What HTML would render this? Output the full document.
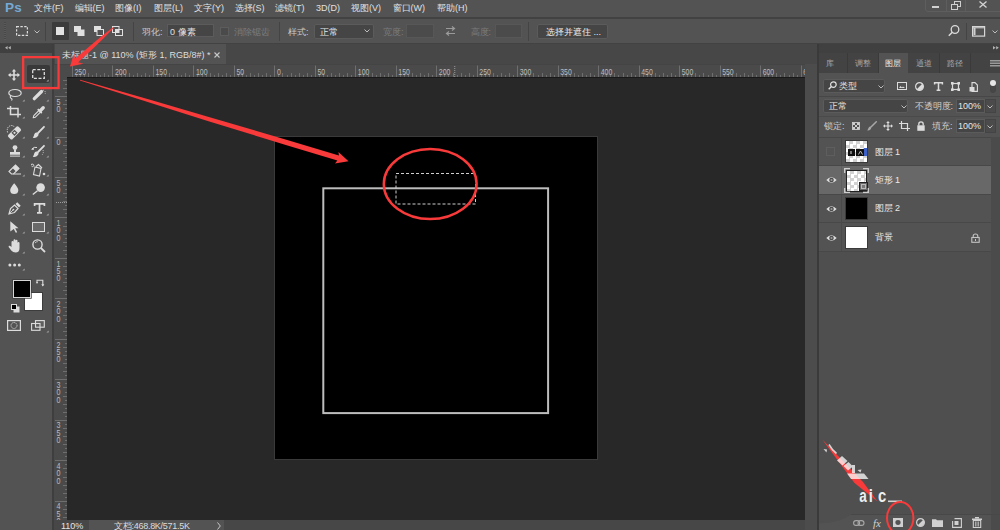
<!DOCTYPE html>
<html><head><meta charset="utf-8">
<style>
*{margin:0;padding:0;box-sizing:border-box}
html,body{width:1000px;height:530px;overflow:hidden;background:#535353;font-family:"Liberation Sans",sans-serif;color:#d6d6d6;font-size:10px}
.a{position:absolute}
.t{position:absolute;white-space:nowrap;line-height:1}
svg{position:absolute;overflow:visible}
</style></head><body>
<!-- menu bar -->
<div class="a" style="left:0;top:0;width:1000px;height:17px;background:#535353"></div>
<div class="a" style="left:0;top:17px;width:1000px;height:2px;background:#424242"></div>
<!-- options bar -->
<div class="a" style="left:0;top:19px;width:1000px;height:24px;background:#535353"></div>
<div class="a" style="left:0;top:43px;width:1000px;height:1px;background:#424242"></div>
<!-- tool panel -->
<div class="a" style="left:0;top:44px;width:52px;height:9px;background:#404040"></div>
<div class="a" style="left:0;top:53px;width:52px;height:477px;background:#535353"></div>
<div class="a" style="left:52px;top:44px;width:2px;height:486px;background:#3e3e3e"></div>
<!-- doc tab bar -->
<div class="a" style="left:54px;top:44px;width:763px;height:20px;background:#474747"></div>
<div class="a" style="left:55px;top:44px;width:171px;height:20px;background:#535353"></div>
<!-- rulers -->
<div class="a" style="left:54px;top:64px;width:751px;height:13px;background:#4a4a4a"></div>
<div class="a" style="left:54px;top:77px;width:13px;height:443px;background:#4a4a4a"></div>
<!-- pasteboard -->
<div class="a" style="left:67px;top:77px;width:738px;height:443px;background:#282828"></div>
<div class="a" style="left:67px;top:77px;width:738px;height:1px;background:#1a1a1a"></div>
<!-- right strip -->
<div class="a" style="left:805px;top:64px;width:12px;height:466px;background:#4c4c4c"></div>
<!-- status bar -->
<div class="a" style="left:54px;top:520px;width:751px;height:10px;background:#474747"></div>
<div class="a" style="left:89px;top:520px;width:135px;height:10px;background:#535353"></div>
<!-- document -->
<div class="a" style="left:274px;top:136px;width:324px;height:324px;background:#000;border:1px solid #3a3a3a"></div>
<svg style="left:0;top:0" width="1000" height="530"><rect x="323.3" y="188.3" width="224.8" height="224.8" fill="none" stroke="#bdbdbd" stroke-width="2"/></svg>

<!-- right panel -->
<div class="a" style="left:817px;top:44px;width:2px;height:486px;background:#3a3a3a"></div>
<div class="a" style="left:819px;top:44px;width:181px;height:9px;background:#404040"></div>
<div class="a" style="left:819px;top:53px;width:181px;height:20px;background:#434343"></div>
<div class="a" style="left:878px;top:53px;width:30px;height:20px;background:#535353"></div>
<div class="a" style="left:819px;top:73px;width:181px;height:457px;background:#535353"></div>

<svg style="left:54px;top:64px;overflow:hidden" width="751" height="13"><rect x="0" y="0" width="751" height="1" fill="#444"/><path d="M18.5 1.5V13 M22.5 11V13 M26.5 9V13 M30.5 11V13 M34.5 9V13 M38.5 11V13 M42.5 9V13 M46.5 11V13 M50.5 9V13 M54.5 11V13 M58.5 1.5V13 M63.5 11V13 M67.5 9V13 M71.5 11V13 M75.5 9V13 M79.5 11V13 M83.5 9V13 M87.5 11V13 M91.5 9V13 M95.5 11V13 M99.5 1.5V13 M103.5 11V13 M107.5 9V13 M111.5 11V13 M115.5 9V13 M119.5 11V13 M123.5 9V13 M127.5 11V13 M131.5 9V13 M135.5 11V13 M139.5 1.5V13 M143.5 11V13 M148.5 9V13 M152.5 11V13 M156.5 9V13 M160.5 11V13 M164.5 9V13 M168.5 11V13 M172.5 9V13 M176.5 11V13 M180.5 1.5V13 M184.5 11V13 M188.5 9V13 M192.5 11V13 M196.5 9V13 M200.5 11V13 M204.5 9V13 M208.5 11V13 M212.5 9V13 M216.5 11V13 M220.5 1.5V13 M224.5 11V13 M228.5 9V13 M233.5 11V13 M237.5 9V13 M241.5 11V13 M245.5 9V13 M249.5 11V13 M253.5 9V13 M257.5 11V13 M261.5 1.5V13 M265.5 11V13 M269.5 9V13 M273.5 11V13 M277.5 9V13 M281.5 11V13 M285.5 9V13 M289.5 11V13 M293.5 9V13 M297.5 11V13 M301.5 1.5V13 M305.5 11V13 M309.5 9V13 M314.5 11V13 M318.5 9V13 M322.5 11V13 M326.5 9V13 M330.5 11V13 M334.5 9V13 M338.5 11V13 M342.5 1.5V13 M346.5 11V13 M350.5 9V13 M354.5 11V13 M358.5 9V13 M362.5 11V13 M366.5 9V13 M370.5 11V13 M374.5 9V13 M378.5 11V13 M382.5 1.5V13 M386.5 11V13 M390.5 9V13 M394.5 11V13 M399.5 9V13 M403.5 11V13 M407.5 9V13 M411.5 11V13 M415.5 9V13 M419.5 11V13 M423.5 1.5V13 M427.5 11V13 M431.5 9V13 M435.5 11V13 M439.5 9V13 M443.5 11V13 M447.5 9V13 M451.5 11V13 M455.5 9V13 M459.5 11V13 M463.5 1.5V13 M467.5 11V13 M471.5 9V13 M475.5 11V13 M479.5 9V13 M484.5 11V13 M488.5 9V13 M492.5 11V13 M496.5 9V13 M500.5 11V13 M504.5 1.5V13 M508.5 11V13 M512.5 9V13 M516.5 11V13 M520.5 9V13 M524.5 11V13 M528.5 9V13 M532.5 11V13 M536.5 9V13 M540.5 11V13 M544.5 1.5V13 M548.5 11V13 M552.5 9V13 M556.5 11V13 M560.5 9V13 M564.5 11V13 M569.5 9V13 M573.5 11V13 M577.5 9V13 M581.5 11V13 M585.5 1.5V13 M589.5 11V13 M593.5 9V13 M597.5 11V13 M601.5 9V13 M605.5 11V13 M609.5 9V13 M613.5 11V13 M617.5 9V13 M621.5 11V13 M625.5 1.5V13 M629.5 11V13 M633.5 9V13 M637.5 11V13 M641.5 9V13 M645.5 11V13 M649.5 9V13 M654.5 11V13 M658.5 9V13 M662.5 11V13 M666.5 1.5V13 M670.5 11V13 M674.5 9V13 M678.5 11V13 M682.5 9V13 M686.5 11V13 M690.5 9V13 M694.5 11V13 M698.5 9V13 M702.5 11V13 M706.5 1.5V13 M710.5 11V13 M714.5 9V13 M718.5 11V13 M722.5 9V13 M726.5 11V13 M730.5 9V13 M735.5 11V13 M739.5 9V13 M743.5 11V13 M747.5 1.5V13" stroke="#6e6e6e" stroke-width="1"/><text x="20.50" y="11.3" font-size="8.4" textLength="11.55" lengthAdjust="spacingAndGlyphs" fill="#bcbcbc" font-family="Liberation Sans">250</text><text x="60.98" y="11.3" font-size="8.4" textLength="11.55" lengthAdjust="spacingAndGlyphs" fill="#bcbcbc" font-family="Liberation Sans">200</text><text x="101.46" y="11.3" font-size="8.4" textLength="11.55" lengthAdjust="spacingAndGlyphs" fill="#bcbcbc" font-family="Liberation Sans">150</text><text x="141.94" y="11.3" font-size="8.4" textLength="11.55" lengthAdjust="spacingAndGlyphs" fill="#bcbcbc" font-family="Liberation Sans">100</text><text x="182.42" y="11.3" font-size="8.4" textLength="7.70" lengthAdjust="spacingAndGlyphs" fill="#bcbcbc" font-family="Liberation Sans">50</text><text x="222.90" y="11.3" font-size="8.4" textLength="3.85" lengthAdjust="spacingAndGlyphs" fill="#bcbcbc" font-family="Liberation Sans">0</text><text x="263.38" y="11.3" font-size="8.4" textLength="7.70" lengthAdjust="spacingAndGlyphs" fill="#bcbcbc" font-family="Liberation Sans">50</text><text x="303.86" y="11.3" font-size="8.4" textLength="11.55" lengthAdjust="spacingAndGlyphs" fill="#bcbcbc" font-family="Liberation Sans">100</text><text x="344.34" y="11.3" font-size="8.4" textLength="11.55" lengthAdjust="spacingAndGlyphs" fill="#bcbcbc" font-family="Liberation Sans">150</text><text x="384.82" y="11.3" font-size="8.4" textLength="11.55" lengthAdjust="spacingAndGlyphs" fill="#bcbcbc" font-family="Liberation Sans">200</text><text x="425.30" y="11.3" font-size="8.4" textLength="11.55" lengthAdjust="spacingAndGlyphs" fill="#bcbcbc" font-family="Liberation Sans">250</text><text x="465.78" y="11.3" font-size="8.4" textLength="11.55" lengthAdjust="spacingAndGlyphs" fill="#bcbcbc" font-family="Liberation Sans">300</text><text x="506.26" y="11.3" font-size="8.4" textLength="11.55" lengthAdjust="spacingAndGlyphs" fill="#bcbcbc" font-family="Liberation Sans">350</text><text x="546.74" y="11.3" font-size="8.4" textLength="11.55" lengthAdjust="spacingAndGlyphs" fill="#bcbcbc" font-family="Liberation Sans">400</text><text x="587.22" y="11.3" font-size="8.4" textLength="11.55" lengthAdjust="spacingAndGlyphs" fill="#bcbcbc" font-family="Liberation Sans">450</text><text x="627.70" y="11.3" font-size="8.4" textLength="11.55" lengthAdjust="spacingAndGlyphs" fill="#bcbcbc" font-family="Liberation Sans">500</text><text x="668.18" y="11.3" font-size="8.4" textLength="11.55" lengthAdjust="spacingAndGlyphs" fill="#bcbcbc" font-family="Liberation Sans">550</text><text x="708.66" y="11.3" font-size="8.4" textLength="11.55" lengthAdjust="spacingAndGlyphs" fill="#bcbcbc" font-family="Liberation Sans">600</text><text x="749.14" y="11.3" font-size="8.4" textLength="11.55" lengthAdjust="spacingAndGlyphs" fill="#bcbcbc" font-family="Liberation Sans">650</text><path d="M400.75 2V13" stroke="#9c9c9c" stroke-width="1" stroke-dasharray="1 1"/></svg>
<svg style="left:54px;top:77px;overflow:hidden" width="13" height="443"><path d="M9 3.5H13 M11 7.5H13 M9 11.5H13 M11 15.5H13 M1 19.5H13 M11 23.5H13 M9 27.5H13 M11 31.5H13 M9 35.5H13 M11 39.5H13 M9 43.5H13 M11 47.5H13 M9 51.5H13 M11 55.5H13 M1 60.5H13 M11 64.5H13 M9 68.5H13 M11 72.5H13 M9 76.5H13 M11 80.5H13 M9 84.5H13 M11 88.5H13 M9 92.5H13 M11 96.5H13 M1 100.5H13 M11 104.5H13 M9 108.5H13 M11 112.5H13 M9 116.5H13 M11 120.5H13 M9 124.5H13 M11 128.5H13 M9 132.5H13 M11 136.5H13 M1 140.5H13 M11 145.5H13 M9 149.5H13 M11 153.5H13 M9 157.5H13 M11 161.5H13 M9 165.5H13 M11 169.5H13 M9 173.5H13 M11 177.5H13 M1 181.5H13 M11 185.5H13 M9 189.5H13 M11 193.5H13 M9 197.5H13 M11 201.5H13 M9 205.5H13 M11 209.5H13 M9 213.5H13 M11 217.5H13 M1 221.5H13 M11 225.5H13 M9 230.5H13 M11 234.5H13 M9 238.5H13 M11 242.5H13 M9 246.5H13 M11 250.5H13 M9 254.5H13 M11 258.5H13 M1 262.5H13 M11 266.5H13 M9 270.5H13 M11 274.5H13 M9 278.5H13 M11 282.5H13 M9 286.5H13 M11 290.5H13 M9 294.5H13 M11 298.5H13 M1 302.5H13 M11 306.5H13 M9 310.5H13 M11 315.5H13 M9 319.5H13 M11 323.5H13 M9 327.5H13 M11 331.5H13 M9 335.5H13 M11 339.5H13 M1 343.5H13 M11 347.5H13 M9 351.5H13 M11 355.5H13 M9 359.5H13 M11 363.5H13 M9 367.5H13 M11 371.5H13 M9 375.5H13 M11 379.5H13 M1 383.5H13 M11 387.5H13 M9 391.5H13 M11 395.5H13 M9 400.5H13 M11 404.5H13 M9 408.5H13 M11 412.5H13 M9 416.5H13 M11 420.5H13 M1 424.5H13 M11 428.5H13 M9 432.5H13 M11 436.5H13 M9 440.5H13" stroke="#6e6e6e" stroke-width="1"/><text x="2.6" y="27.62" font-size="8.4" textLength="4" lengthAdjust="spacingAndGlyphs" fill="#bcbcbc" font-family="Liberation Sans">5</text><text x="2.6" y="34.97" font-size="8.4" textLength="4" lengthAdjust="spacingAndGlyphs" fill="#bcbcbc" font-family="Liberation Sans">0</text><text x="2.6" y="68.10" font-size="8.4" textLength="4" lengthAdjust="spacingAndGlyphs" fill="#bcbcbc" font-family="Liberation Sans">0</text><text x="2.6" y="108.58" font-size="8.4" textLength="4" lengthAdjust="spacingAndGlyphs" fill="#bcbcbc" font-family="Liberation Sans">5</text><text x="2.6" y="115.93" font-size="8.4" textLength="4" lengthAdjust="spacingAndGlyphs" fill="#bcbcbc" font-family="Liberation Sans">0</text><text x="2.6" y="149.06" font-size="8.4" textLength="4" lengthAdjust="spacingAndGlyphs" fill="#bcbcbc" font-family="Liberation Sans">1</text><text x="2.6" y="156.41" font-size="8.4" textLength="4" lengthAdjust="spacingAndGlyphs" fill="#bcbcbc" font-family="Liberation Sans">0</text><text x="2.6" y="163.76" font-size="8.4" textLength="4" lengthAdjust="spacingAndGlyphs" fill="#bcbcbc" font-family="Liberation Sans">0</text><text x="2.6" y="189.54" font-size="8.4" textLength="4" lengthAdjust="spacingAndGlyphs" fill="#bcbcbc" font-family="Liberation Sans">1</text><text x="2.6" y="196.89" font-size="8.4" textLength="4" lengthAdjust="spacingAndGlyphs" fill="#bcbcbc" font-family="Liberation Sans">5</text><text x="2.6" y="204.24" font-size="8.4" textLength="4" lengthAdjust="spacingAndGlyphs" fill="#bcbcbc" font-family="Liberation Sans">0</text><text x="2.6" y="230.02" font-size="8.4" textLength="4" lengthAdjust="spacingAndGlyphs" fill="#bcbcbc" font-family="Liberation Sans">2</text><text x="2.6" y="237.37" font-size="8.4" textLength="4" lengthAdjust="spacingAndGlyphs" fill="#bcbcbc" font-family="Liberation Sans">0</text><text x="2.6" y="244.72" font-size="8.4" textLength="4" lengthAdjust="spacingAndGlyphs" fill="#bcbcbc" font-family="Liberation Sans">0</text><text x="2.6" y="270.50" font-size="8.4" textLength="4" lengthAdjust="spacingAndGlyphs" fill="#bcbcbc" font-family="Liberation Sans">2</text><text x="2.6" y="277.85" font-size="8.4" textLength="4" lengthAdjust="spacingAndGlyphs" fill="#bcbcbc" font-family="Liberation Sans">5</text><text x="2.6" y="285.20" font-size="8.4" textLength="4" lengthAdjust="spacingAndGlyphs" fill="#bcbcbc" font-family="Liberation Sans">0</text><text x="2.6" y="310.98" font-size="8.4" textLength="4" lengthAdjust="spacingAndGlyphs" fill="#bcbcbc" font-family="Liberation Sans">3</text><text x="2.6" y="318.33" font-size="8.4" textLength="4" lengthAdjust="spacingAndGlyphs" fill="#bcbcbc" font-family="Liberation Sans">0</text><text x="2.6" y="325.68" font-size="8.4" textLength="4" lengthAdjust="spacingAndGlyphs" fill="#bcbcbc" font-family="Liberation Sans">0</text><text x="2.6" y="351.46" font-size="8.4" textLength="4" lengthAdjust="spacingAndGlyphs" fill="#bcbcbc" font-family="Liberation Sans">3</text><text x="2.6" y="358.81" font-size="8.4" textLength="4" lengthAdjust="spacingAndGlyphs" fill="#bcbcbc" font-family="Liberation Sans">5</text><text x="2.6" y="366.16" font-size="8.4" textLength="4" lengthAdjust="spacingAndGlyphs" fill="#bcbcbc" font-family="Liberation Sans">0</text><text x="2.6" y="391.94" font-size="8.4" textLength="4" lengthAdjust="spacingAndGlyphs" fill="#bcbcbc" font-family="Liberation Sans">4</text><text x="2.6" y="399.29" font-size="8.4" textLength="4" lengthAdjust="spacingAndGlyphs" fill="#bcbcbc" font-family="Liberation Sans">0</text><text x="2.6" y="406.64" font-size="8.4" textLength="4" lengthAdjust="spacingAndGlyphs" fill="#bcbcbc" font-family="Liberation Sans">0</text><text x="2.6" y="432.42" font-size="8.4" textLength="4" lengthAdjust="spacingAndGlyphs" fill="#bcbcbc" font-family="Liberation Sans">4</text><text x="2.6" y="439.77" font-size="8.4" textLength="4" lengthAdjust="spacingAndGlyphs" fill="#bcbcbc" font-family="Liberation Sans">5</text><text x="2.6" y="447.12" font-size="8.4" textLength="4" lengthAdjust="spacingAndGlyphs" fill="#bcbcbc" font-family="Liberation Sans">0</text><path d="M2 125.5H13" stroke="#9c9c9c" stroke-width="1" stroke-dasharray="1 1"/></svg>
<!-- MENU -->
<div class="t" style="left:5px;top:1px;font-size:13.5px;font-weight:bold;color:#74a8d6;letter-spacing:0.3px">Ps</div>
<div class="t" style="left:34px;top:4px;font-size:9px;color:#e0e0e0">文件(F)</div>
<div class="t" style="left:74.5px;top:4px;font-size:9px;color:#e0e0e0">编辑(E)</div>
<div class="t" style="left:115px;top:4px;font-size:9px;color:#e0e0e0">图像(I)</div>
<div class="t" style="left:154px;top:4px;font-size:9px;color:#e0e0e0">图层(L)</div>
<div class="t" style="left:194px;top:4px;font-size:9px;color:#e0e0e0">文字(Y)</div>
<div class="t" style="left:234.5px;top:4px;font-size:9px;color:#e0e0e0">选择(S)</div>
<div class="t" style="left:275px;top:4px;font-size:9px;color:#e0e0e0">滤镜(T)</div>
<div class="t" style="left:316px;top:4px;font-size:9px;color:#e0e0e0">3D(D)</div>
<div class="t" style="left:351px;top:4px;font-size:9px;color:#e0e0e0">视图(V)</div>
<div class="t" style="left:392.5px;top:4px;font-size:9px;color:#e0e0e0">窗口(W)</div>
<div class="t" style="left:437px;top:4px;font-size:9px;color:#e0e0e0">帮助(H)</div>
<!-- window controls -->
<div class="a" style="left:925px;top:-2px;width:80px;height:14px;border:1px solid #5e5e5e;border-radius:0 0 0 3px"></div>
<div class="a" style="left:946px;top:0;width:1px;height:11px;background:#5e5e5e"></div>
<div class="a" style="left:965px;top:0;width:1px;height:11px;background:#5e5e5e"></div>
<div class="a" style="left:932px;top:6px;width:7px;height:2px;background:#d0d0d0"></div>
<svg style="left:951px;top:1px" width="10" height="9"><rect x="3.5" y="0.5" width="6" height="5" fill="none" stroke="#cfcfcf" stroke-width="1"/><rect x="0.5" y="3.5" width="6" height="5" fill="#535353" stroke="#cfcfcf" stroke-width="1"/></svg>
<svg style="left:979px;top:1px" width="8" height="7"><path d="M0.5 0.5L7.5 6.5M7.5 0.5L0.5 6.5" stroke="#d4d4d4" stroke-width="1.3"/></svg>
<!-- OPTIONS BAR -->
<div class="a" style="left:4px;top:22px;width:2px;height:18px;background:repeating-linear-gradient(#484848 0 1px,#5a5a5a 1px 2px)"></div>
<svg style="left:16px;top:26px" width="12" height="10"><rect x="0.6" y="0.6" width="10.8" height="8.8" fill="none" stroke="#dcdcdc" stroke-width="1.2" stroke-dasharray="2.4 1.4"/></svg>
<svg style="left:34px;top:30px" width="6" height="4"><path d="M0.5 0.5L3 3L5.5 0.5" fill="none" stroke="#bdbdbd" stroke-width="1"/></svg>
<div class="a" style="left:45px;top:22px;width:1px;height:19px;background:#444"></div>
<div class="a" style="left:52px;top:22px;width:17px;height:18px;background:#3c3c3c;border-radius:1px"></div>
<div class="a" style="left:56px;top:27px;width:8px;height:8px;background:#e2e2e2"></div>
<svg style="left:74px;top:26px" width="11" height="10"><rect x="0" y="0" width="7" height="6" fill="#e0e0e0"/><rect x="3.5" y="3.5" width="7" height="6.5" fill="#e0e0e0"/></svg>
<svg style="left:94px;top:26px" width="10" height="10"><rect x="0" y="0" width="7" height="6" fill="#e0e0e0"/><rect x="3" y="3.5" width="6.5" height="6" fill="#535353" stroke="#e0e0e0" stroke-width="1"/></svg>
<svg style="left:112px;top:26px" width="11" height="10"><rect x="0.5" y="0.5" width="6.5" height="6" fill="none" stroke="#e0e0e0" stroke-width="1"/><rect x="3.5" y="3.5" width="7" height="6" fill="none" stroke="#e0e0e0" stroke-width="1"/><rect x="3.5" y="3.5" width="3.5" height="3" fill="#e0e0e0"/></svg>
<div class="a" style="left:133px;top:22px;width:1px;height:19px;background:#444"></div>
<div class="t" style="left:142px;top:27.5px;font-size:9px;color:#c9c9c9">羽化:</div>
<div class="a" style="left:167px;top:24px;width:47px;height:13px;background:#454545;border:1px solid #5b5b5b"></div>
<div class="t" style="left:170px;top:27.5px;font-size:9px;color:#e0e0e0">0 像素</div>
<div class="a" style="left:220px;top:26.5px;width:9px;height:9px;background:#4a4a4a;border:1px solid #5c5c5c"></div>
<div class="t" style="left:234px;top:27.5px;font-size:9px;color:#7c7c7c">消除锯齿</div>
<div class="a" style="left:279px;top:22px;width:1px;height:19px;background:#444"></div>
<div class="t" style="left:288px;top:27.5px;font-size:9px;color:#c9c9c9">样式:</div>
<div class="a" style="left:313.5px;top:23.5px;width:60px;height:15px;background:#454545;border:1px solid #5b5b5b;border-radius:2px"></div>
<div class="t" style="left:320px;top:27.5px;font-size:9px;color:#e6e6e6">正常</div>
<svg style="left:364px;top:29px" width="6" height="4"><path d="M0.5 0.5L3 3L5.5 0.5" fill="none" stroke="#bdbdbd" stroke-width="1"/></svg>
<div class="t" style="left:383px;top:27.5px;font-size:9px;color:#7c7c7c">宽度:</div>
<div class="a" style="left:406px;top:24px;width:28px;height:13.5px;background:#4b4b4b;border:1px solid #575757"></div>
<svg style="left:445px;top:26px" width="11" height="10"><path d="M1 2.5H9M7 0.5L9.5 2.5L7 4.5M10 7.5H2M4 5.5L1.5 7.5L4 9.5" fill="none" stroke="#9a9a9a" stroke-width="1.2"/></svg>
<div class="t" style="left:470.5px;top:27.5px;font-size:9px;color:#7c7c7c">高度:</div>
<div class="a" style="left:494.5px;top:24px;width:27px;height:13.5px;background:#4b4b4b;border:1px solid #575757"></div>
<div class="a" style="left:528px;top:22px;width:1px;height:19px;background:#444"></div>
<div class="a" style="left:536.5px;top:23.5px;width:71.5px;height:15px;background:#454545;border:1px solid #5b5b5b;border-radius:2px"></div>
<div class="t" style="left:546px;top:27.5px;font-size:9px;color:#ececec">选择并遮住 ...</div>
<svg style="left:948px;top:25px" width="12" height="12"><circle cx="7" cy="4.5" r="3.8" fill="none" stroke="#dadada" stroke-width="1.3"/><path d="M4.3 7.2L0.8 10.7" stroke="#dadada" stroke-width="1.5"/></svg>
<div class="a" style="left:966px;top:22.5px;width:1px;height:17px;background:#444"></div>
<svg style="left:972px;top:26px" width="14" height="11"><rect x="0.6" y="0.6" width="12" height="9.5" fill="none" stroke="#d6d6d6" stroke-width="1.2"/><rect x="1.5" y="2" width="2" height="7" fill="#cfcfcf"/><path d="M0.6 1.8H12.6" stroke="#d6d6d6" stroke-width="1"/></svg>
<svg style="left:991.5px;top:29.5px" width="6" height="4"><path d="M0.5 0.5L3 3L5.5 0.5" fill="none" stroke="#bdbdbd" stroke-width="1"/></svg>

<!-- TOOLBAR -->
<svg style="left:4.5px;top:46.3px" width="6" height="4"><path d="M2.6 0L0 1.8L2.6 3.6ZM5.8 0L3.2 1.8L5.8 3.6Z" fill="#b4b4b4"/></svg>
<!-- move -->
<svg style="left:7.5px;top:68.5px" width="12" height="12"><path d="M6 0L8.2 2.6H6.8V5.2H9.4V3.8L12 6L9.4 8.2V6.8H6.8V9.4H8.2L6 12L3.8 9.4H5.2V6.8H2.6V8.2L0 6L2.6 3.8V5.2H5.2V2.6H3.8Z" fill="#dcdcdc"/></svg>
<div class="a" style="left:27px;top:64.8px;width:23px;height:18.2px;background:#393939;border-radius:2px"></div>
<svg style="left:32px;top:69px" width="13" height="10"><rect x="0.7" y="0.7" width="11.6" height="8.6" fill="none" stroke="#dcdcdc" stroke-width="1.3" stroke-dasharray="3 1.6"/></svg>
<!-- lasso -->
<svg style="left:8px;top:88.5px" width="14" height="12"><ellipse cx="7" cy="4" rx="6.2" ry="3.5" fill="none" stroke="#dcdcdc" stroke-width="1.2"/><path d="M2.5 6.8Q1.8 9 3.5 9.5Q4.5 10 3.5 11.5" fill="none" stroke="#dcdcdc" stroke-width="1.1"/></svg>
<!-- quick select -->
<svg style="left:32px;top:89px" width="15" height="12"><path d="M2.3 9.7L9.5 2.5" stroke="#dcdcdc" stroke-width="3.3" stroke-linecap="round"/><path d="M11 1.2A2.6 2.6 0 0 1 13.2 4.8" fill="none" stroke="#dcdcdc" stroke-width="0.9" stroke-dasharray="1 1"/></svg>
<!-- crop -->
<svg style="left:6.5px;top:105.5px" width="15" height="12"><path d="M3.5 0V8.5H14M0 2.5H11V11.5" fill="none" stroke="#dcdcdc" stroke-width="1.5"/></svg>
<!-- eyedropper -->
<svg style="left:32px;top:105.5px" width="13" height="13"><path d="M1.2 11.8L1.8 9.6L7.4 4L9 5.6L3.4 11.2Z" fill="none" stroke="#dcdcdc" stroke-width="1.1" stroke-linejoin="round"/><path d="M5.8 3.2L9.8 7.2" stroke="#dcdcdc" stroke-width="1.7"/><path d="M8.4 4.6L11.2 1.8" stroke="#dcdcdc" stroke-width="3.4" stroke-linecap="round"/></svg>
<!-- healing -->
<svg style="left:6px;top:123.5px" width="16" height="16"><g transform="rotate(-45 8.5 8.8)"><rect x="1.3" y="5.8" width="14.4" height="6" rx="1.6" fill="#dcdcdc"/><rect x="6.3" y="6.6" width="4.4" height="4.4" fill="#535353"/><circle cx="8.5" cy="8.8" r="1.1" fill="#dcdcdc"/></g><path d="M1.6 8.5Q0.2 2.8 4.8 1.6Q7.6 1.2 8.6 3.6" fill="none" stroke="#dcdcdc" stroke-width="0.9" stroke-dasharray="1.3 0.9"/></svg>
<!-- brush -->
<svg style="left:32px;top:125.5px" width="13" height="13"><path d="M12 0.8L6 7" stroke="#dcdcdc" stroke-width="1.8" stroke-linecap="round"/><path d="M5 6.5Q7.5 8 6 10Q4 12.5 0.8 11.8Q2 10 2.3 8.2Q3 6 5 6.5Z" fill="#dcdcdc"/></svg>
<!-- stamp -->
<svg style="left:8.5px;top:144.5px" width="12" height="12"><circle cx="6" cy="2.6" r="2.4" fill="#dcdcdc"/><path d="M5 4.5H7V7H11V9.8H1V7H5Z" fill="#dcdcdc"/><rect x="1" y="10.6" width="10" height="1" fill="#dcdcdc"/></svg>
<!-- history brush -->
<svg style="left:31px;top:144.5px" width="14" height="13"><path d="M13 0.8L7 7" stroke="#dcdcdc" stroke-width="1.8" stroke-linecap="round"/><path d="M6 6.5Q8.5 8 7 10Q5 12.5 1.8 11.8Q3 10 3.3 8.2Q4 6 6 6.5Z" fill="#dcdcdc"/><path d="M1 4Q3 1.5 6 2.5" fill="none" stroke="#dcdcdc" stroke-width="1"/><path d="M0 4.5L2.5 2.5L2.8 5Z" fill="#dcdcdc"/><path d="M12 5Q13 8 11 10" fill="none" stroke="#dcdcdc" stroke-width="0.8" stroke-dasharray="1 1"/></svg>
<!-- eraser -->
<svg style="left:8px;top:163.5px" width="14" height="12"><path d="M1 7.5L7.5 1L11 4.5L5.5 10H3.5Z" fill="none" stroke="#dcdcdc" stroke-width="1.1"/><path d="M4.5 4L7.5 1L11 4.5L8 7.5Z" fill="#dcdcdc"/><path d="M5.5 10H13" stroke="#dcdcdc" stroke-width="1"/></svg>
<!-- paint bucket -->
<svg style="left:30px;top:162.5px" width="17" height="14"><path d="M5 4L11 5.5L9.5 13L3.5 11.5Z" fill="none" stroke="#dcdcdc" stroke-width="1.1"/><path d="M6 3.5L8.5 1.5L12 5" fill="none" stroke="#dcdcdc" stroke-width="1.2"/><circle cx="14" cy="11" r="1.3" fill="#dcdcdc"/><path d="M1 1.5Q3 0 4 2.5Q2.5 4.5 1.5 3" fill="none" stroke="#dcdcdc" stroke-width="1"/></svg>
<!-- blur drop -->
<svg style="left:9.5px;top:182.5px" width="9" height="12"><path d="M4.2 0.3Q8.5 5 8.3 7.5Q8 11 4.2 11Q0.3 11 0.2 7.5Q0 5 4.2 0.3Z" fill="#dcdcdc"/></svg>
<!-- dodge -->
<svg style="left:31.5px;top:182.5px" width="14" height="12"><circle cx="8.6" cy="4.6" r="4.3" fill="#dcdcdc"/><path d="M5.5 7.8L0.8 11.5" stroke="#dcdcdc" stroke-width="1.4"/></svg>
<!-- pen -->
<svg style="left:8px;top:202px" width="13" height="13"><path d="M1 12L2.5 6.5L6.5 3L10 6.5L6.5 10.5Z" fill="none" stroke="#dcdcdc" stroke-width="1.2"/><path d="M7.5 2L9.3 0.3L12.7 3.7L11 5.5Z" fill="#dcdcdc"/><path d="M1 12L5 8" stroke="#dcdcdc" stroke-width="0.9"/><circle cx="5.4" cy="7.6" r="0.9" fill="#dcdcdc"/></svg>
<!-- type -->
<svg style="left:33.5px;top:202.5px" width="11" height="11"><path d="M0.6 3V0.8H10.4V3M5.5 0.8V9.8M3 9.8H8" fill="none" stroke="#dcdcdc" stroke-width="1.7"/></svg>
<!-- path select -->
<svg style="left:10px;top:220.5px" width="9" height="12"><path d="M0.3 0.2L8.5 7.2L5.2 7.3L7.2 11.2L5.8 11.8L3.8 8L0.3 10.5Z" fill="#dcdcdc"/></svg>
<!-- rect -->
<div class="a" style="left:31.5px;top:222px;width:13px;height:9.5px;border:1.3px solid #dcdcdc;background:#6a6a6a"></div>
<!-- hand -->
<svg style="left:7.5px;top:239px" width="14" height="14"><path d="M3.5 8V3.2Q3.5 2 4.5 2Q5.5 2 5.5 3.2V7V1.5Q5.5 0.3 6.5 0.3Q7.5 0.3 7.5 1.5V7V2Q7.5 0.8 8.5 0.8Q9.5 0.8 9.5 2V7.2V4Q9.5 3 10.5 3Q11.5 3 11.5 4V9Q11.5 13.5 7.5 13.5Q5 13.5 3.5 11.8L0.8 8.3Q0.2 7.3 1 6.8Q1.8 6.3 2.6 7.3Z" fill="#dcdcdc"/></svg>
<!-- zoom -->
<svg style="left:31.5px;top:239px" width="14" height="14"><circle cx="5.5" cy="5.5" r="4.6" fill="none" stroke="#dcdcdc" stroke-width="1.4"/><path d="M8.8 8.8L13 13" stroke="#dcdcdc" stroke-width="1.8"/><path d="M3 4Q4 2.6 5.8 2.6" fill="none" stroke="#dcdcdc" stroke-width="0.8"/></svg>
<!-- dots -->
<svg style="left:7.5px;top:263px" width="14" height="4"><circle cx="1.9" cy="1.9" r="1.5" fill="#dcdcdc"/><circle cx="6.6" cy="1.9" r="1.5" fill="#dcdcdc"/><circle cx="11.3" cy="1.9" r="1.5" fill="#dcdcdc"/></svg>
<!-- colors -->
<div class="a" style="left:24px;top:291.5px;width:18.5px;height:19px;background:#fff;border:1px solid #3c3c3c"></div>
<div class="a" style="left:12.8px;top:280px;width:18.6px;height:18.4px;background:#000;border:1.5px solid #d6d6d6;box-shadow:0 0 0 0.7px #3c3c3c"></div>
<svg style="left:35.5px;top:279px" width="9" height="8"><path d="M1 3.5V1.2H6.8V6.8" fill="none" stroke="#dcdcdc" stroke-width="1.1"/><path d="M0 3L1 5L2.2 3ZM5.3 5.3H8.3L6.8 7.5Z" fill="#dcdcdc"/></svg>
<svg style="left:11px;top:303.5px" width="9" height="9"><rect x="2.5" y="2.5" width="6" height="6" fill="#dcdcdc"/><rect x="0.5" y="0.5" width="5" height="5" fill="#000" stroke="#dcdcdc" stroke-width="1"/></svg>
<!-- quick mask -->
<svg style="left:6.5px;top:319.5px" width="14" height="11"><rect x="0.6" y="0.6" width="12.8" height="9.8" fill="none" stroke="#dcdcdc" stroke-width="1.2"/><circle cx="7" cy="5.5" r="3" fill="none" stroke="#dcdcdc" stroke-width="0.9" stroke-dasharray="1.2 0.8"/></svg>
<!-- screen mode -->
<svg style="left:31px;top:320px" width="14" height="11"><rect x="4.5" y="0.6" width="8.8" height="6.6" fill="#5e5e5e" stroke="#dcdcdc" stroke-width="1.1"/><rect x="0.6" y="3.5" width="8.4" height="6.8" fill="none" stroke="#dcdcdc" stroke-width="1.1"/></svg>
<svg style="left:46px;top:79px" width="3" height="3"><path d="M2.6 0.4V2.6H0.4Z" fill="#a8a8a8"/></svg>
<svg style="left:22px;top:98.5px" width="3" height="3"><path d="M2.6 0.4V2.6H0.4Z" fill="#a8a8a8"/></svg>
<svg style="left:46px;top:98.5px" width="3" height="3"><path d="M2.6 0.4V2.6H0.4Z" fill="#a8a8a8"/></svg>
<svg style="left:22px;top:115.5px" width="3" height="3"><path d="M2.6 0.4V2.6H0.4Z" fill="#a8a8a8"/></svg>
<svg style="left:46px;top:115.5px" width="3" height="3"><path d="M2.6 0.4V2.6H0.4Z" fill="#a8a8a8"/></svg>
<svg style="left:22px;top:136px" width="3" height="3"><path d="M2.6 0.4V2.6H0.4Z" fill="#a8a8a8"/></svg>
<svg style="left:46px;top:136px" width="3" height="3"><path d="M2.6 0.4V2.6H0.4Z" fill="#a8a8a8"/></svg>
<svg style="left:22px;top:155px" width="3" height="3"><path d="M2.6 0.4V2.6H0.4Z" fill="#a8a8a8"/></svg>
<svg style="left:46px;top:155px" width="3" height="3"><path d="M2.6 0.4V2.6H0.4Z" fill="#a8a8a8"/></svg>
<svg style="left:22px;top:174px" width="3" height="3"><path d="M2.6 0.4V2.6H0.4Z" fill="#a8a8a8"/></svg>
<svg style="left:46px;top:174px" width="3" height="3"><path d="M2.6 0.4V2.6H0.4Z" fill="#a8a8a8"/></svg>
<svg style="left:22px;top:193px" width="3" height="3"><path d="M2.6 0.4V2.6H0.4Z" fill="#a8a8a8"/></svg>
<svg style="left:46px;top:193px" width="3" height="3"><path d="M2.6 0.4V2.6H0.4Z" fill="#a8a8a8"/></svg>
<svg style="left:22px;top:212.5px" width="3" height="3"><path d="M2.6 0.4V2.6H0.4Z" fill="#a8a8a8"/></svg>
<svg style="left:46px;top:212.5px" width="3" height="3"><path d="M2.6 0.4V2.6H0.4Z" fill="#a8a8a8"/></svg>
<svg style="left:22px;top:231px" width="3" height="3"><path d="M2.6 0.4V2.6H0.4Z" fill="#a8a8a8"/></svg>
<svg style="left:46px;top:231px" width="3" height="3"><path d="M2.6 0.4V2.6H0.4Z" fill="#a8a8a8"/></svg>
<svg style="left:22px;top:251px" width="3" height="3"><path d="M2.6 0.4V2.6H0.4Z" fill="#a8a8a8"/></svg>
<svg style="left:22px;top:268px" width="3" height="3"><path d="M2.6 0.4V2.6H0.4Z" fill="#a8a8a8"/></svg>
<svg style="left:46px;top:330px" width="3" height="3"><path d="M2.6 0.4V2.6H0.4Z" fill="#a8a8a8"/></svg>

<!-- TAB TITLE -->
<div class="t" style="left:62px;top:51px;font-size:9px;color:#dedede">未标题-1 @ 110% (矩形 1, RGB/8#) *</div>
<svg style="left:214px;top:51.5px" width="6" height="6"><path d="M0.5 0.5L5.5 5.5M5.5 0.5L0.5 5.5" stroke="#c8c8c8" stroke-width="1.1"/></svg>
<!-- PANEL TABS -->
<svg style="left:992.5px;top:46.3px" width="6" height="4"><path d="M0 0L2.6 1.8L0 3.6ZM3.2 0L5.8 1.8L3.2 3.6Z" fill="#b4b4b4"/></svg>
<div class="a" style="left:846.5px;top:53px;width:1px;height:20px;background:#3a3a3a"></div>
<div class="a" style="left:877.5px;top:53px;width:1px;height:20px;background:#3a3a3a"></div>
<div class="a" style="left:938.5px;top:53px;width:1px;height:20px;background:#3a3a3a"></div>
<div class="a" style="left:969.5px;top:53px;width:1px;height:20px;background:#3a3a3a"></div>
<div class="t" style="left:826px;top:58.5px;font-size:8.4px;color:#a8a8a8">库</div>
<div class="t" style="left:854.5px;top:58.5px;font-size:8.4px;color:#a8a8a8">调整</div>
<div class="t" style="left:885px;top:58.5px;font-size:8.4px;color:#ececec">图层</div>
<div class="t" style="left:915.5px;top:58.5px;font-size:8.4px;color:#a8a8a8">通道</div>
<div class="t" style="left:946.5px;top:58.5px;font-size:8.4px;color:#a8a8a8">路径</div>
<svg style="left:990px;top:60px" width="10" height="7"><path d="M0 0.75H10M0 3.25H10M0 5.75H10" stroke="#9a9a9a" stroke-width="1.3"/></svg>
<!-- filter row -->
<div class="a" style="left:822.5px;top:78.5px;width:62.5px;height:14.2px;background:#454545;border:1px solid #5b5b5b;border-radius:2px"></div>
<svg style="left:828px;top:81px" width="9" height="9"><circle cx="5.4" cy="3.6" r="2.8" fill="none" stroke="#e0e0e0" stroke-width="1.2"/><path d="M3.4 5.6L0.7 8.3" stroke="#e0e0e0" stroke-width="1.4"/></svg>
<div class="t" style="left:838.5px;top:81.5px;font-size:9px;color:#e6e6e6">类型</div>
<svg style="left:878px;top:85px" width="6" height="4"><path d="M0.5 0.5L3 3L5.5 0.5" fill="none" stroke="#bdbdbd" stroke-width="1"/></svg>
<svg style="left:896.5px;top:82px" width="10" height="8"><rect x="0.5" y="0.5" width="9" height="7" fill="none" stroke="#dcdcdc" stroke-width="1"/><path d="M2 6L3.5 4L5 5.5L6 4.5L8 6Z" fill="#dcdcdc"/></svg>
<svg style="left:915px;top:81.5px" width="9" height="9"><circle cx="4.5" cy="4.5" r="3.9" fill="none" stroke="#dcdcdc" stroke-width="1.2"/><path d="M7.25 1.75A3.9 3.9 0 0 1 1.75 7.25Z" fill="#dcdcdc"/></svg>
<svg style="left:933.5px;top:82px" width="9" height="9"><path d="M0.6 2.4V0.7H8.4V2.4M4.5 0.7V8.2M2.6 8.2H6.4" fill="none" stroke="#dcdcdc" stroke-width="1.5"/></svg>
<svg style="left:950.5px;top:82px" width="9" height="9"><rect x="1.5" y="1.5" width="6" height="6" fill="none" stroke="#dcdcdc" stroke-width="1.2"/><rect x="0" y="0" width="2.6" height="2.6" fill="#dcdcdc"/><rect x="6.4" y="0" width="2.6" height="2.6" fill="#dcdcdc"/><rect x="0" y="6.4" width="2.6" height="2.6" fill="#dcdcdc"/><rect x="6.4" y="6.4" width="2.6" height="2.6" fill="#dcdcdc"/></svg>
<svg style="left:968.5px;top:81.5px" width="9" height="10"><path d="M3 0.6H6L8.4 3V9.4H3Z" fill="none" stroke="#dcdcdc" stroke-width="1.1"/><rect x="0.5" y="5" width="5" height="4.5" fill="#dcdcdc"/></svg>
<div class="a" style="left:989.8px;top:80px;width:6.5px;height:12.5px;border-radius:3.2px;background:#474747;border:1px solid #454545"></div>
<div class="a" style="left:989.8px;top:79.6px;width:6.5px;height:6.5px;border-radius:3.3px;background:#e6e6e6"></div>
<div class="a" style="left:819px;top:96px;width:181px;height:1px;background:#474747"></div>
<!-- blend row -->
<div class="a" style="left:822.5px;top:99px;width:85.5px;height:14px;background:#454545;border:1px solid #5b5b5b;border-radius:2px"></div>
<div class="t" style="left:829px;top:102.2px;font-size:9px;color:#e6e6e6">正常</div>
<svg style="left:901px;top:104.5px" width="6" height="4"><path d="M0.5 0.5L3 3L5.5 0.5" fill="none" stroke="#bdbdbd" stroke-width="1"/></svg>
<div class="t" style="left:914.5px;top:101.5px;font-size:9px;color:#cfcfcf">不透明度:</div>
<div class="a" style="left:956px;top:99px;width:28.5px;height:14px;background:#454545;border:1px solid #5b5b5b"></div>
<div class="t" style="left:958px;top:101.5px;font-size:9px;color:#e6e6e6">100%</div>
<div class="a" style="left:985px;top:99px;width:10.5px;height:14px;background:#4b4b4b;border:1px solid #444"></div>
<svg style="left:987px;top:104.5px" width="6" height="4"><path d="M0.5 0.5L3 3L5.5 0.5" fill="none" stroke="#bdbdbd" stroke-width="1"/></svg>
<!-- lock row -->
<div class="a" style="left:819px;top:116px;width:181px;height:1px;background:#4a4a4a"></div>
<div class="t" style="left:824px;top:121.5px;font-size:9px;color:#cfcfcf">锁定:</div>
<svg style="left:851.5px;top:122px" width="8" height="8"><rect x="0.5" y="0.5" width="7" height="7" fill="none" stroke="#cfcfcf" stroke-width="0.9"/><rect x="1" y="1" width="2" height="2" fill="#cfcfcf"/><rect x="5" y="1" width="2" height="2" fill="#cfcfcf"/><rect x="3" y="3" width="2" height="2" fill="#cfcfcf"/><rect x="1" y="5" width="2" height="2" fill="#cfcfcf"/><rect x="5" y="5" width="2" height="2" fill="#cfcfcf"/></svg>
<svg style="left:867px;top:121px" width="10" height="10"><path d="M9.3 0.7L4 6" stroke="#a8a8a8" stroke-width="1.5" stroke-linecap="round"/><path d="M3.5 5.5Q5 7 3.5 8.5Q2 9.8 0.3 9.5Q1 8 1.5 7Q2 5.2 3.5 5.5Z" fill="#a8a8a8"/></svg>
<svg style="left:883px;top:121px" width="10" height="10"><path d="M5 0L6.8 2H5.6V4.4H8V3.2L10 5L8 6.8V5.6H5.6V8H6.8L5 10L3.2 8H4.4V5.6H2V6.8L0 5L2 3.2V4.4H4.4V2H3.2Z" fill="#dcdcdc"/></svg>
<svg style="left:899px;top:121px" width="11" height="10"><path d="M2.5 0V7.5H11M0 2.5H8.5V10" fill="none" stroke="#dcdcdc" stroke-width="1.2"/></svg>
<svg style="left:917px;top:120.5px" width="8" height="10"><path d="M1.8 4.5V3Q1.8 0.8 4 0.8Q6.2 0.8 6.2 3V4.5" fill="none" stroke="#dcdcdc" stroke-width="1.3"/><rect x="0.3" y="4.3" width="7.4" height="5.5" fill="#dcdcdc"/></svg>
<div class="t" style="left:932px;top:121.5px;font-size:9px;color:#cfcfcf">填充:</div>
<div class="a" style="left:956px;top:119px;width:28.5px;height:14px;background:#454545;border:1px solid #5b5b5b"></div>
<div class="t" style="left:958px;top:121.5px;font-size:9px;color:#e6e6e6">100%</div>
<div class="a" style="left:985px;top:119px;width:10.5px;height:14px;background:#4b4b4b;border:1px solid #444"></div>
<svg style="left:987px;top:124.5px" width="6" height="4"><path d="M0.5 0.5L3 3L5.5 0.5" fill="none" stroke="#bdbdbd" stroke-width="1"/></svg>

<!-- LAYERS -->
<div class="a" style="left:819px;top:136.5px;width:181px;height:393.5px;background:#4f4f4f"></div>
<div class="a" style="left:991px;top:136.5px;width:9px;height:393.5px;background:#4b4b4b"></div>
<div class="a" style="left:819px;top:136.5px;width:172px;height:115px;background:#535353"></div>
<div class="a" style="left:819px;top:136.5px;width:172px;height:1px;background:#474747"></div>
<div class="a" style="left:819px;top:165.5px;width:172px;height:28.7px;background:#686868"></div>
<div class="a" style="left:819px;top:165px;width:172px;height:1px;background:#484848"></div>
<div class="a" style="left:819px;top:194px;width:172px;height:1px;background:#484848"></div>
<div class="a" style="left:819px;top:222px;width:172px;height:1px;background:#484848"></div>
<div class="a" style="left:819px;top:251px;width:172px;height:1px;background:#484848"></div>
<div class="a" style="left:840.5px;top:137px;width:1px;height:28px;background:#4a4a4a"></div>
<div class="a" style="left:840.5px;top:166px;width:1px;height:28px;background:#5e5e5e"></div>
<div class="a" style="left:840.5px;top:195px;width:1px;height:56px;background:#4a4a4a"></div>
<!-- row1 -->
<div class="a" style="left:826px;top:147px;width:9px;height:9px;border:1px solid #5e5e5e"></div>
<div class="a" style="left:844.5px;top:139.5px;width:23px;height:23px;border:1px solid #3a3a3a;background:repeating-conic-gradient(#d2d2d2 0 25%,#ffffff 0 50%) 0 0/7px 7px"></div>
<div class="a" style="left:847.5px;top:148.5px;width:7.5px;height:7.5px;background:#111"></div>
<div class="a" style="left:856px;top:148.5px;width:7.5px;height:7.5px;background:#111"></div>
<div class="a" style="left:850px;top:150.5px;width:2px;height:3px;background:#777"></div>
<svg style="left:857.5px;top:149.5px" width="5" height="5"><path d="M0.5 4.5L2.5 1L4.5 4.5" fill="none" stroke="#bbb" stroke-width="1"/></svg>
<div class="a" style="left:864px;top:148px;width:2.5px;height:8px;background:#3a5fc8"></div>
<div class="t" style="left:874.5px;top:148px;font-size:9px;color:#e8e8e8">图层 1</div>
<!-- row2 -->
<svg style="left:825.5px;top:176.2px" width="11" height="8"><path d="M0.3 4Q5.5 -1.6 10.7 4Q5.5 9.6 0.3 4Z" fill="#dedede"/><circle cx="5.5" cy="4" r="2.3" fill="#4a4a4a"/><circle cx="5.5" cy="4" r="1.1" fill="#9a9a9a"/></svg>
<div class="a" style="left:845.5px;top:169.5px;width:21.5px;height:22.5px;border:1.3px solid #222;background:repeating-conic-gradient(#d2d2d2 0 25%,#ffffff 0 50%) 0 0/7px 7px"></div>
<div class="a" style="left:858.5px;top:182px;width:9px;height:9px;background:#686868;border:1.2px solid #222"></div>
<div class="a" style="left:860.5px;top:184px;width:5px;height:5px;border:1.2px solid #b8b8b8;background:#777"></div>
<svg style="left:843.5px;top:168px" width="25" height="25"><path d="M0.7 5V0.7H6M19 0.7H24.3V5M24.3 20V24.3H19M6 24.3H0.7V20" fill="none" stroke="#cfcfcf" stroke-width="1.3"/></svg>
<div class="t" style="left:874.5px;top:176px;font-size:9px;color:#ececec">矩形 1</div>
<!-- row3 -->
<svg style="left:825.5px;top:205.2px" width="11" height="8"><path d="M0.3 4Q5.5 -1.6 10.7 4Q5.5 9.6 0.3 4Z" fill="#dedede"/><circle cx="5.5" cy="4" r="2.3" fill="#4a4a4a"/><circle cx="5.5" cy="4" r="1.1" fill="#9a9a9a"/></svg>
<div class="a" style="left:844.5px;top:197px;width:23px;height:22.5px;background:#000;border:1px solid #3a3a3a"></div>
<div class="t" style="left:874.5px;top:204px;font-size:9px;color:#e8e8e8">图层 2</div>
<!-- row4 -->
<svg style="left:825.5px;top:233.7px" width="11" height="8"><path d="M0.3 4Q5.5 -1.6 10.7 4Q5.5 9.6 0.3 4Z" fill="#dedede"/><circle cx="5.5" cy="4" r="2.3" fill="#4a4a4a"/><circle cx="5.5" cy="4" r="1.1" fill="#9a9a9a"/></svg>
<div class="a" style="left:844.5px;top:225.5px;width:23px;height:23px;background:#fff;border:1px solid #3a3a3a"></div>
<div class="t" style="left:874.5px;top:233px;font-size:9px;color:#e8e8e8">背景</div>
<svg style="left:971px;top:232.5px" width="9" height="10"><path d="M2.2 4.5V3Q2.2 1 4.5 1Q6.8 1 6.8 3V4.5" fill="none" stroke="#c4c4c4" stroke-width="1.1"/><rect x="0.8" y="4.5" width="7.4" height="4.8" fill="none" stroke="#c4c4c4" stroke-width="1.1"/><rect x="4" y="6" width="1" height="2" fill="#c4c4c4"/></svg>

<!-- STATUS -->
<div class="t" style="left:61px;top:521.5px;font-size:9px;color:#e6e6e6">110%</div>
<div class="t" style="left:114px;top:521.5px;font-size:9px;letter-spacing:-0.27px;color:#dcdcdc">文档:468.8K/571.5K</div>
<svg style="left:217px;top:522px" width="4" height="8"><path d="M0.5 0.5L3.3 4L0.5 7.5" fill="none" stroke="#c8c8c8" stroke-width="1"/></svg>
<!-- PANEL BOTTOM -->
<svg style="left:0;top:0" width="1000" height="530"><path d="M851 514.5H991V530H819V523.5Q840 523 851 514.5Z" fill="#535353"/></svg>
<div class="a" style="left:851px;top:514px;width:149px;height:1px;background:#484848"></div>
<svg style="left:852.5px;top:520px" width="12" height="6"><rect x="0.6" y="0.6" width="6" height="4.8" rx="2.4" fill="none" stroke="#a8a8a8" stroke-width="1.1"/><rect x="5" y="0.6" width="6" height="4.8" rx="2.4" fill="none" stroke="#a8a8a8" stroke-width="1.1"/></svg>
<div class="t" style="left:873px;top:517.5px;font-size:11px;font-style:italic;color:#d0d0d0;font-family:'Liberation Serif',serif">fx</div>
<svg style="left:893px;top:518px" width="10" height="9"><rect x="0" y="0" width="10" height="9" fill="#d0d0d0"/><ellipse cx="5" cy="4.5" rx="2.6" ry="2.4" fill="#535353"/></svg>
<svg style="left:915.5px;top:518px" width="9" height="9"><circle cx="4.5" cy="4.5" r="3.9" fill="none" stroke="#d0d0d0" stroke-width="1.2"/><path d="M7.25 1.75A3.9 3.9 0 0 1 1.75 7.25Z" fill="#d0d0d0"/></svg>
<svg style="left:932px;top:517.5px" width="11" height="9"><path d="M0 1.2H4L5 2.3H11V9H0Z" fill="#d0d0d0"/></svg>
<svg style="left:952px;top:517.5px" width="10" height="10"><path d="M2.5 0.6H9.4V9.4H0.6V3" fill="none" stroke="#d0d0d0" stroke-width="1.1"/><rect x="2.5" y="3" width="4" height="4" fill="#d0d0d0"/></svg>
<svg style="left:972px;top:516.5px" width="10" height="11"><rect x="3" y="0" width="4" height="1.5" fill="#d0d0d0"/><rect x="0" y="1.5" width="10" height="1.5" fill="#d0d0d0"/><path d="M1.3 3.5H8.7V10.5H1.3Z" fill="none" stroke="#d0d0d0" stroke-width="1.1"/><path d="M3.5 4.5V9.5M5 4.5V9.5M6.5 4.5V9.5" stroke="#d0d0d0" stroke-width="0.7"/></svg>

<svg style="left:0;top:0" width="1000" height="530">
<rect x="396" y="173.5" width="79.5" height="30.5" fill="none" stroke="#cfcfcf" stroke-width="1" stroke-dasharray="3 2"/>
<ellipse cx="430.2" cy="184" rx="46.4" ry="35.1" fill="none" stroke="#f83a3a" stroke-width="2.5"/>
<path d="M79.88 80.58 L149.28 102.62 L208.47 121.15 L285.81 144.90 L337.39 160.62 L334.99 163.39 L348.50 161.20 L338.46 151.90 L338.93 155.54 L287.25 140.11 L209.69 117.13 L150.12 99.84 L80.12 79.82Z" fill="#f83a3a"/>
<path d="M113.63 26.80 L101.77 36.10 L90.22 45.74 L74.99 58.80 L74.15 53.37 L69.90 66.60 L83.51 63.79 L78.20 62.37 L92.82 48.64 L103.64 38.19 L114.17 27.40Z" fill="#f83a3a"/>
<rect x="23.15" y="57.15" width="35.4" height="30.9" fill="none" stroke="#f83a3a" stroke-width="2.3"/>
<path d="M822.1 439.2L863 482L877.5 501.5L854.5 483Z" fill="#f83a3a"/>
<g fill="#ffffff" opacity="0.75">
<path d="M829 444.5Q832 450 836.5 453.5" fill="none" stroke="#fff" stroke-width="1.6"/>
<path d="M823.5 449L827 449.5L826.5 452.5Z"/>
<path d="M837 460.5L842 456L847.5 461L842.5 465.5Z"/>
<path d="M843.5 466L848.5 462L853 466.5L848 470.5Z"/>
<rect x="852" y="465" width="3" height="8"/>
<path d="M847 473.5L864 473.5L868.5 479L851 479Z"/>
<path d="M857.5 470L861.5 469.5L860.5 472.5Z"/>
<rect x="888" y="500.5" width="14" height="1.6"/>
</g>
<g fill="#eeeeee" font-family="Liberation Sans" font-size="13.5" font-weight="bold">
<text x="0" y="0" transform="translate(859.3 501.5) scale(1 1.3)">a</text>
<text x="0" y="0" transform="translate(868.8 501.5) scale(1.1 1.3)">i</text>
<text x="0" y="0" transform="translate(878 501.5) scale(1.1 1.3)">c</text>
</g>
<ellipse cx="900.2" cy="518" rx="13.2" ry="16" fill="none" stroke="#f83a3a" stroke-width="2"/>
</svg>
</body></html>
